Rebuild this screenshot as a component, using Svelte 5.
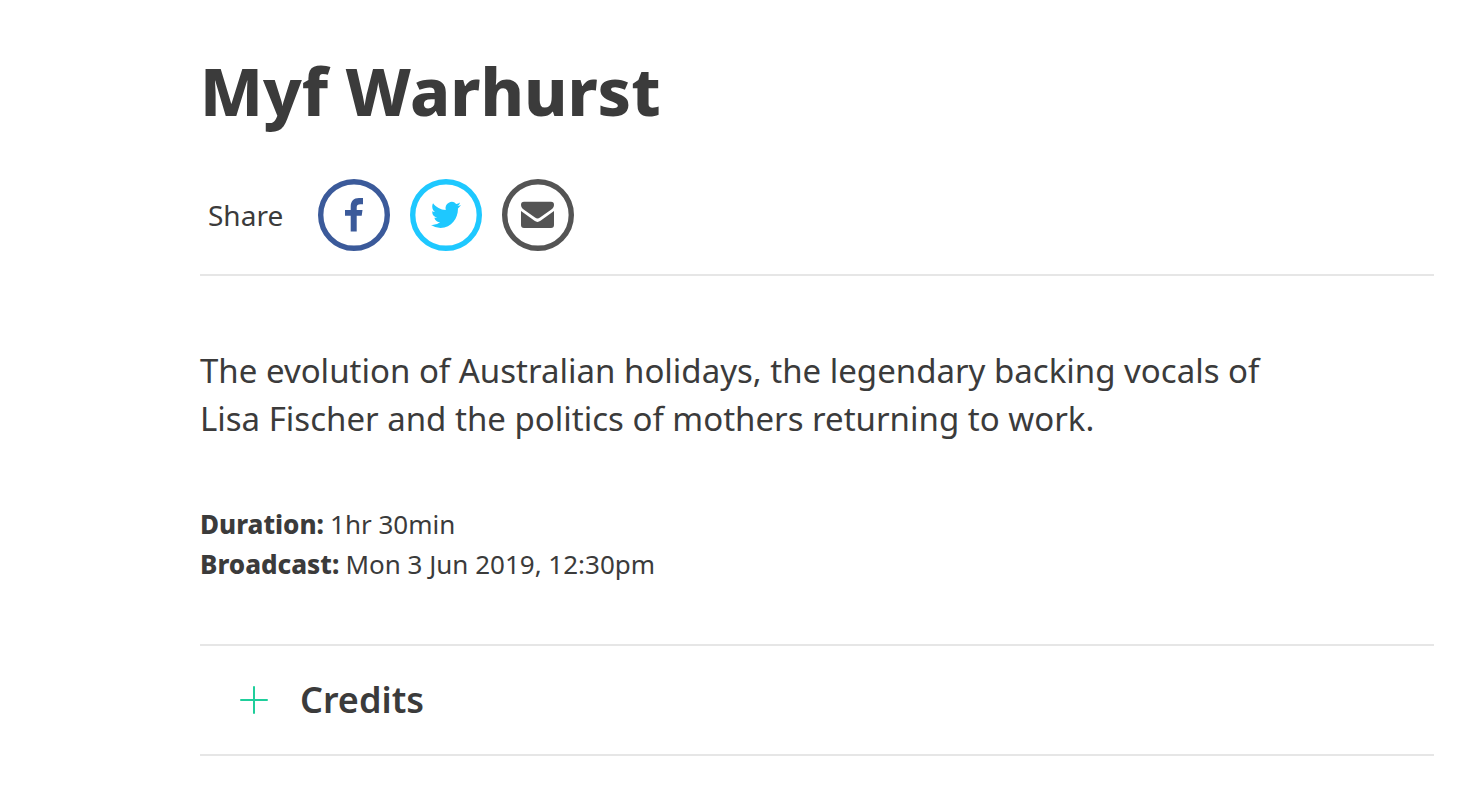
<script>
	let open = $state(false);

	const links = [
		{
			name: 'facebook',
			label: 'Share on Facebook',
			path: 'M32.7 52.5V36.7H27V31h5.7v-3.2c0-5.8 3-8.800 8.300-8.800h4v6.200h-2.500c-2.700 0-3.800 1.100-3.800 3.300V31h5.800l-.8 5.700h-5v15.800z'
		},
		{
			name: 'twitter',
			label: 'Share on Twitter',
			path: 'M23.953 4.570a10 10 0 0 1-2.825.775 4.958 4.958 0 0 0 2.163-2.723c-.951.555-2.005.959-3.127 1.184a4.920 4.920 0 0 0-8.384 4.482C7.690 8.095 4.067 6.130 1.640 3.162a4.822 4.822 0 0 0-.666 2.475c0 1.710.870 3.213 2.188 4.096a4.904 4.904 0 0 1-2.228-.616v.060a4.923 4.923 0 0 0 3.946 4.827 4.996 4.996 0 0 1-2.212.085 4.936 4.936 0 0 0 4.604 3.417 9.867 9.867 0 0 1-6.102 2.105c-.390 0-.779-.023-1.170-.067a13.995 13.995 0 0 0 7.557 2.209c9.053 0 13.998-7.496 13.998-13.985 0-.210 0-.420-.015-.630a9.935 9.935 0 0 0 2.460-2.548z',
			transform: 'translate(21 20) scale(1.25 1.33)'
		},
		{
			name: 'email',
			label: 'Share by email',
			path: 'M22 22.800h27q3 0 3 3c0 2-1 3.600-3 5L38 38.500q-2.500 1.800-5 0L22 30.800c-2-1.400-3-3-3-5q0-3 3-3zM19 32l13.500 9.800q3 2.200 6 0L52 32v14q0 3-3 3H22q-3 0-3-3z'
		}
	];

	const details = [
		{ term: 'Duration', value: '1hr 30min' },
		{ term: 'Broadcast', value: 'Mon 3 Jun 2019, 12:30pm' }
	];
</script>

<main>
	<h1>Myf Warhurst</h1>

	<div class="share">
		<span class="share-label">Share</span>
		{#each links as link}
			<a class={link.name} href="#{link.name}" aria-label={link.label}>
				<svg viewBox="0 0 72 72" aria-hidden="true">
					<circle cx="36" cy="36" r="33.3" />
					<path d={link.path} transform={link.transform} />
				</svg>
			</a>
		{/each}
	</div>

	<p class="summary">
		The evolution of Australian holidays, the legendary backing vocals of Lisa Fischer and the
		politics of mothers returning to work.
	</p>

	<dl>
		{#each details as detail}
			<div>
				<dt>{detail.term}:</dt>
				<dd>{detail.value}</dd>
			</div>
		{/each}
	</dl>

	<section>
		<h2>
			<button aria-expanded={open} onclick={() => (open = !open)}>
				<svg viewBox="0 0 28 28" aria-hidden="true">
					<path d={open ? 'M1 14h26' : 'M1 14h26M14 1v26'} />
				</svg>
				Credits
			</button>
		</h2>
	</section>
</main>

<style>
	:global(body) {
		margin: 0;
		background: #fff;
	}

	main {
		padding: 40px 48px 46px 200px;
		font-family: 'Noto Sans', 'Open Sans', sans-serif;
		color: #3b3b3b;
	}

	h1 {
		margin: 0;
		font-size: 66px;
		line-height: 100px;
		font-weight: 800;
	}

	.share {
		display: flex;
		align-items: center;
		gap: 20px;
		margin-top: 39px;
		padding-bottom: 23px;
		border-bottom: 2px solid #e6e6e6;
	}

	.share-label {
		margin: 0 15px 0 8px;
		font-size: 28px;
		line-height: 40px;
	}

	.share a {
		width: 72px;
		height: 72px;
		color: #3b5a9a;
	}

	.share a.twitter {
		color: #1ec8ff;
	}

	.share a.email {
		color: #545454;
	}

	.share svg {
		display: block;
		fill: currentColor;
	}

	.share circle {
		fill: none;
		stroke: currentColor;
		stroke-width: 5.4;
	}

	.summary {
		max-width: 1080px;
		margin: 71px 0 61px;
		font-size: 33px;
		line-height: 48px;
	}

	dl {
		margin: 0 0 60px;
		font-size: 26px;
		line-height: 40px;
	}

	dl div {
		display: flex;
		gap: 6px;
	}

	dt {
		font-weight: 800;
	}

	dd {
		margin: 0;
	}

	section {
		border: solid #e6e6e6;
		border-width: 2px 0;
	}

	h2 {
		margin: 0;
	}

	button {
		display: flex;
		align-items: center;
		gap: 32px;
		width: 100%;
		padding: 30px 40px;
		border: 0;
		background: none;
		font: 600 36px/48px 'Noto Sans', 'Open Sans', sans-serif;
		color: inherit;
		cursor: pointer;
	}

	button svg {
		width: 28px;
		height: 28px;
		fill: none;
		stroke: #1fce9b;
		stroke-width: 2;
		stroke-linecap: round;
	}
</style>
